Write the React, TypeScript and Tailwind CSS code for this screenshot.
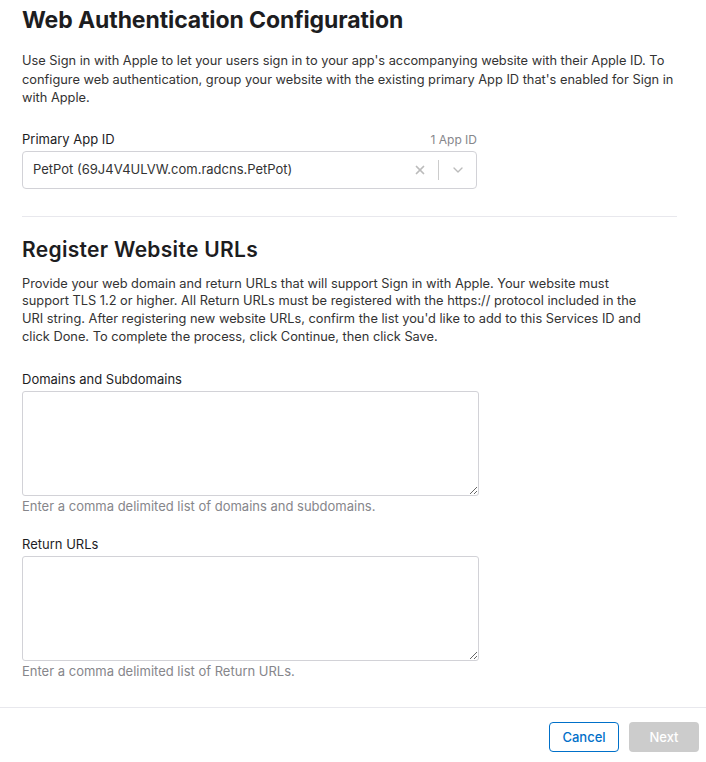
import { X, ChevronDown } from "lucide-react";

function Field({ label, help }: { label: string; help: string }) {
  return (
    <div className="flex flex-col">
      <label className="text-[13px] text-[#1d1d1f] leading-[18px]">{label}</label>
      <textarea className="mt-[3px] h-[105px] w-[457px] rounded-[3px] border border-[#d2d2d7] bg-white" />
      <p className="mt-[1px] text-[13px] leading-[18px] text-[#86868b]">{help}</p>
    </div>
  );
}

export default function App() {
  return (
    <div className="min-h-[762px] w-[706px] bg-white font-['Inter',sans-serif] text-[#1d1d1f]">
      <div className="px-[22px] w-[699px]">
        <h1 className="pt-[6px] text-[23px] font-bold leading-[29px] tracking-[-0.1px]">
          Web Authentication Configuration
        </h1>
        <p className="mt-[17px] text-[12.8px] leading-[18.5px] text-[#333]">
          Use Sign in with Apple to let your users sign in to your app's accompanying website with their Apple ID. To
          configure web authentication, group your website with the existing primary App ID that's enabled for Sign in
          with Apple.
        </p>

        <div className="mt-[22px] w-[455px]">
          <div className="flex items-end justify-between">
            <span className="text-[13px] leading-[18px]">Primary App ID</span>
            <span className="text-[12px] leading-[16px] text-[#86868b]">1 App ID</span>
          </div>
          <div className="mt-[3px] flex h-[38px] items-center rounded-[4px] border border-[#d2d2d7] pl-[10px]">
            <span className="flex-1 text-[13px] text-[#333]">PetPot (69J4V4ULVW.com.radcns.PetPot)</span>
            <X size={14} strokeWidth={3} className="text-[#bbb]" />
            <span className="mx-[11px] h-[20px] w-px bg-[#ccc]" />
            <ChevronDown size={16} strokeWidth={2} className="mr-[10px] text-[#bbb]" />
          </div>
        </div>

        <div className="mt-[27px] border-t border-[#e8e8ed]" />

        <h2 className="mt-[19px] text-[21px] font-semibold leading-[27px] tracking-[0.3px]">Register Website URLs</h2>
        <p className="mt-[12px] max-w-[630px] text-[12.8px] leading-[17.7px] text-[#333]">
          Provide your web domain and return URLs that will support Sign in with Apple. Your website must support TLS
          1.2 or higher. All Return URLs must be registered with the https:// protocol included in the URI string. After
          registering new website URLs, confirm the list you'd like to add to this Services ID and click Done. To
          complete the process, click Continue, then click Save.
        </p>

        <div className="mt-[25px] flex flex-col gap-[20px]">
          <Field label="Domains and Subdomains" help="Enter a comma delimited list of domains and subdomains." />
          <Field label="Return URLs" help="Enter a comma delimited list of Return URLs." />
        </div>
      </div>

      <div className="mt-[27px] border-t border-[#e8e8ed]" />
      <div className="flex justify-end gap-[10px] px-[7px] pt-[14px]">
        <button className="h-[30px] w-[70px] rounded-[4px] border border-[#0070c9] text-[13px] font-medium text-[#0070c9]">
          Cancel
        </button>
        <button className="h-[30px] w-[70px] rounded-[4px] bg-[#ccc] text-[13px] font-medium text-white">Next</button>
      </div>
    </div>
  );
}
